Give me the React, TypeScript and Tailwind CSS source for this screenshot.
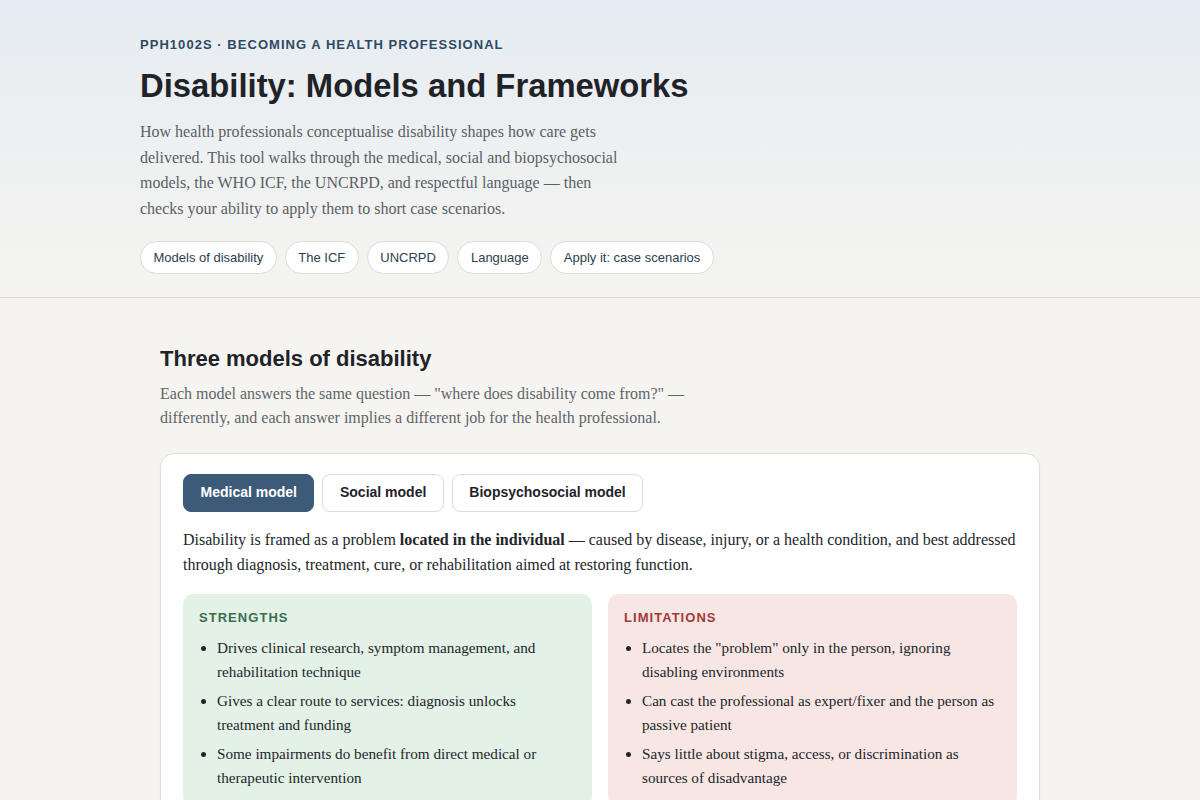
import { useState } from "react";

const sections = [
  "Models of disability",
  "The ICF",
  "UNCRPD",
  "Language",
  "Apply it: case scenarios",
];

const models = ["Medical model", "Social model", "Biopsychosocial model"];

const strengths = [
  "Drives clinical research, symptom management, and rehabilitation technique",
  "Gives a clear route to services: diagnosis unlocks treatment and funding",
  "Some impairments do benefit from direct medical or therapeutic intervention",
];

const limitations = [
  'Locates the "problem" only in the person, ignoring disabling environments',
  "Can cast the professional as expert/fixer and the person as passive patient",
  "Says little about stigma, access, or discrimination as sources of disadvantage",
];

const sans = "font-['Liberation_Sans',Arial,sans-serif]";
const serif = "font-['Liberation_Serif','Times_New_Roman',serif]";

export default function App() {
  const [active, setActive] = useState(0);

  return (
    <div className={`min-h-screen bg-[#f5f4f0] ${serif}`}>
      <header className="border-b border-[#dcdad4] bg-gradient-to-b from-[#e6ecf2] to-[#f5f4f0]">
        <div className="mx-auto max-w-[920px] pt-[35px] pb-[23px]">
          <p
            className={`${sans} text-[13px] font-bold uppercase tracking-[0.08em] text-[#2f4a63]`}
          >
            PPH1002S · Becoming a health professional
          </p>
          <h1
            className={`${sans} mt-[11px] text-[32.8px] leading-tight font-bold text-[#1f2328]`}
          >
            Disability: Models and Frameworks
          </h1>
          <p className="mt-[13px] max-w-[490px] text-[16px] leading-[25.5px] text-[#5a5f66]">
            How health professionals conceptualise disability shapes how care
            gets delivered. This tool walks through the medical, social and
            biopsychosocial models, the WHO ICF, the UNCRPD, and respectful
            language — then checks your ability to apply them to short case
            scenarios.
          </p>
          <nav className="mt-[20px] flex flex-wrap gap-2">
            {sections.map((s) => (
              <a
                key={s}
                href="#"
                className={`${sans} rounded-full border border-[#dedcd6] bg-white px-[12.5px] py-[7px] text-[13px] leading-[17px] text-[#2c3e50]`}
              >
                {s}
              </a>
            ))}
          </nav>
        </div>
      </header>

      <main className="mx-auto max-w-[880px] pt-[47px] pb-12">
        <h2
          className={`${sans} text-[22px] leading-tight font-bold text-[#1f2328]`}
        >
          Three models of disability
        </h2>
        <p className="mt-[9px] max-w-[560px] text-[16px] leading-[24px] text-[#5f646b]">
          Each model answers the same question — "where does disability come
          from?" — differently, and each answer implies a different job for
          the health professional.
        </p>

        <section className="mt-[23px] rounded-[14px] border border-[#e2dfd8] bg-white px-[22px] pt-[20px] pb-[22px] shadow-[0_1px_3px_rgba(0,0,0,0.03)]">
          <div className="flex gap-2">
            {models.map((m, i) => (
              <button
                key={m}
                onClick={() => setActive(i)}
                className={`${sans} rounded-[8px] border px-[16.5px] py-[9.5px] text-[14px] leading-[17px] font-bold ${
                  i === active
                    ? "border-[#3d5a78] bg-[#3d5a78] text-white"
                    : "border-[#dedcd6] bg-white text-[#1f2328]"
                }`}
              >
                {m}
              </button>
            ))}
          </div>

          <p className="mt-[15px] text-[16px] leading-[25px] text-[#22262b]">
            Disability is framed as a problem{" "}
            <strong className="font-bold">located in the individual</strong> —
            caused by disease, injury, or a health condition, and best
            addressed through diagnosis, treatment, cure, or rehabilitation
            aimed at restoring function.
          </p>

          <div className="mt-[17px] grid grid-cols-2 gap-4">
            <div className="rounded-[10px] bg-[#e3f1e7] px-[16px] pt-[14px] pb-[16px]">
              <h3
                className={`${sans} text-[13px] font-bold uppercase tracking-[0.08em] text-[#3b6e4b]`}
              >
                Strengths
              </h3>
              <ul className="mt-[9px] list-disc space-y-[5px] pl-[18px] text-[15.2px] leading-[24px] text-[#22262b]">
                {strengths.map((s) => (
                  <li key={s}>{s}</li>
                ))}
              </ul>
            </div>
            <div className="rounded-[10px] bg-[#f7e6e3] px-[16px] pt-[14px] pb-[16px]">
              <h3
                className={`${sans} text-[13px] font-bold uppercase tracking-[0.08em] text-[#a13a3a]`}
              >
                Limitations
              </h3>
              <ul className="mt-[9px] list-disc space-y-[5px] pl-[18px] text-[15.2px] leading-[24px] text-[#22262b]">
                {limitations.map((s) => (
                  <li key={s}>{s}</li>
                ))}
              </ul>
            </div>
          </div>
        </section>
      </main>
    </div>
  );
}
